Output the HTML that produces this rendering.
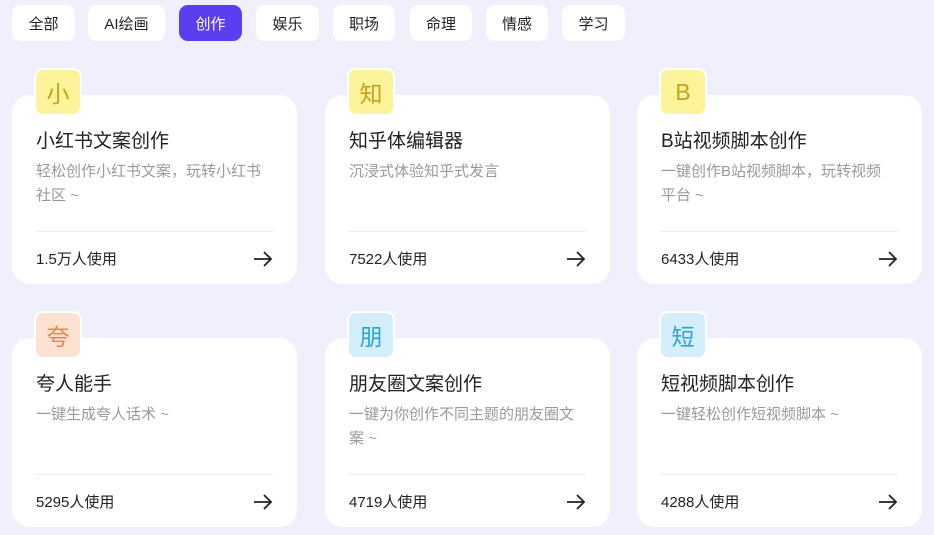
<!DOCTYPE html><html><head><meta charset="utf-8"><style>
*{margin:0;padding:0;box-sizing:border-box}
body{width:934px;height:535px;background:#f0f0fc;font-family:"Liberation Sans","Noto Sans CJK SC",sans-serif;position:relative;overflow:hidden}
.tab{position:absolute;top:5px;height:36px;background:#fff;border-radius:9px;font-size:15px;color:#222;display:flex;align-items:center;justify-content:center}
.tab.on{background:#5a3ef0;color:#fff}
.card{position:absolute;width:285px;height:189px;background:#fff;border-radius:18px}
.ic{position:absolute;left:22px;top:-27px;width:48px;height:48px;border:2px solid #fff;border-radius:9px;font-size:23px;display:flex;align-items:center;justify-content:center}
.y{background:#fdf39a;color:#c6a11c}.o{background:#fde2d2;color:#ef8540}.b{background:#d4effb;color:#29a6d8}
.t{position:absolute;left:24px;top:31px;font-size:19px;color:#222}
.d{position:absolute;left:24px;top:65px;width:229px;font-size:15px;line-height:24px;color:#9a9a9a}
.hr{position:absolute;left:24px;right:24px;top:136px;border-top:1px solid #ececec}
.u{position:absolute;left:24px;top:153px;font-size:15px;color:#222}
.a{position:absolute;right:24px;top:156px}
</style></head><body>
<div class="tab" style="left:12px;width:63px">全部</div>
<div class="tab" style="left:88px;width:77px">AI绘画</div>
<div class="tab on" style="left:179px;width:63px">创作</div>
<div class="tab" style="left:256px;width:63px">娱乐</div>
<div class="tab" style="left:333px;width:62px">职场</div>
<div class="tab" style="left:410px;width:62px">命理</div>
<div class="tab" style="left:486px;width:62px">情感</div>
<div class="tab" style="left:562px;width:63px">学习</div>

<div class="card" style="left:12px;top:95px"><div class="ic y">小</div><div class="t">小红书文案创作</div><div class="d">轻松创作小红书文案，玩转小红书社区 ~</div><div class="hr"></div><div class="u">1.5万人使用</div><svg class="a" width="20" height="16" viewBox="0 0 20 16"><path d="M1 8H18M11 1L18 8L11 15" fill="none" stroke="#222" stroke-width="1.8"/></svg></div>
<div class="card" style="left:325px;top:95px"><div class="ic y">知</div><div class="t">知乎体编辑器</div><div class="d">沉浸式体验知乎式发言</div><div class="hr"></div><div class="u">7522人使用</div><svg class="a" width="20" height="16" viewBox="0 0 20 16"><path d="M1 8H18M11 1L18 8L11 15" fill="none" stroke="#222" stroke-width="1.8"/></svg></div>
<div class="card" style="left:637px;top:95px"><div class="ic y">B</div><div class="t">B站视频脚本创作</div><div class="d">一键创作B站视频脚本，玩转视频<br>平台 ~</div><div class="hr"></div><div class="u">6433人使用</div><svg class="a" width="20" height="16" viewBox="0 0 20 16"><path d="M1 8H18M11 1L18 8L11 15" fill="none" stroke="#222" stroke-width="1.8"/></svg></div>

<div class="card" style="left:12px;top:338px"><div class="ic o">夸</div><div class="t">夸人能手</div><div class="d">一键生成夸人话术 ~</div><div class="hr"></div><div class="u">5295人使用</div><svg class="a" width="20" height="16" viewBox="0 0 20 16"><path d="M1 8H18M11 1L18 8L11 15" fill="none" stroke="#222" stroke-width="1.8"/></svg></div>
<div class="card" style="left:325px;top:338px"><div class="ic b">朋</div><div class="t">朋友圈文案创作</div><div class="d">一键为你创作不同主题的朋友圈文<br>案 ~</div><div class="hr"></div><div class="u">4719人使用</div><svg class="a" width="20" height="16" viewBox="0 0 20 16"><path d="M1 8H18M11 1L18 8L11 15" fill="none" stroke="#222" stroke-width="1.8"/></svg></div>
<div class="card" style="left:637px;top:338px"><div class="ic b">短</div><div class="t">短视频脚本创作</div><div class="d">一键轻松创作短视频脚本 ~</div><div class="hr"></div><div class="u">4288人使用</div><svg class="a" width="20" height="16" viewBox="0 0 20 16"><path d="M1 8H18M11 1L18 8L11 15" fill="none" stroke="#222" stroke-width="1.8"/></svg></div>
</body></html>
